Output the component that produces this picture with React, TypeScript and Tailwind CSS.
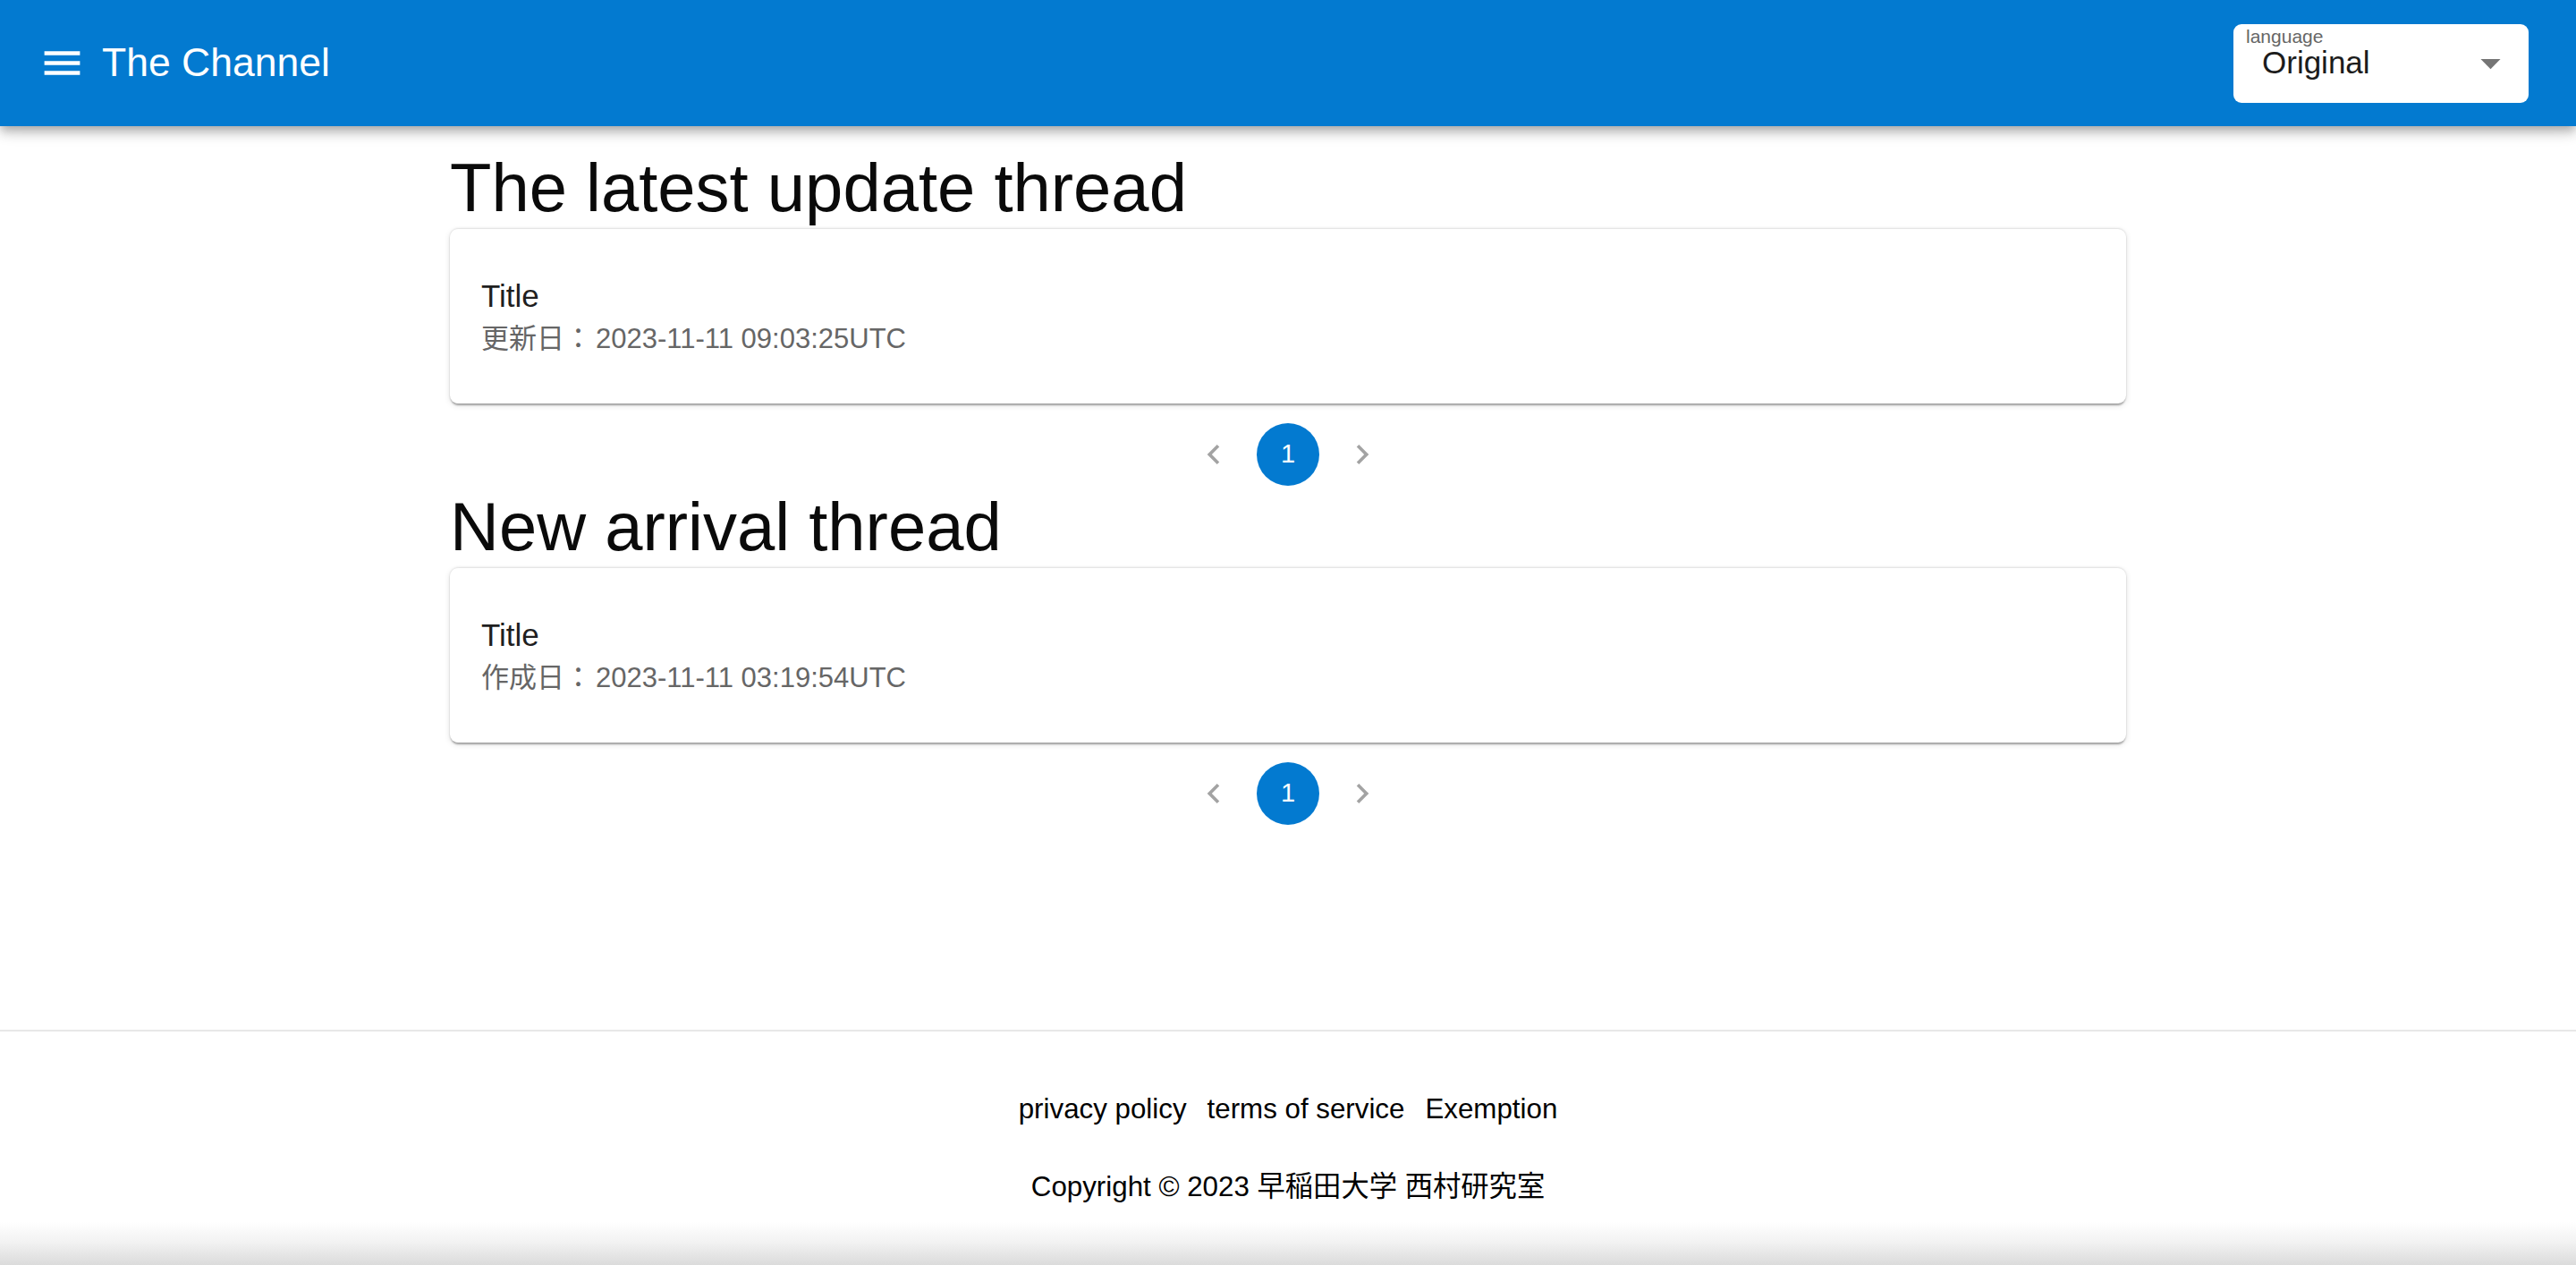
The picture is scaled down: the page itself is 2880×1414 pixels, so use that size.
import { useState } from "react";

const threads = {
  latest: [{ title: "Title", label: "更新日", date: "2023-11-11 09:03:25UTC" }],
  arrival: [{ title: "Title", label: "作成日", date: "2023-11-11 03:19:54UTC" }],
};

const font = "font-['Liberation_Sans','Noto_Sans_CJK_JP',sans-serif]";

const MenuIcon = () => (
  <svg viewBox="0 0 24 24" className="w-[53px] h-[53px] fill-white">
    <path d="M3 18h18v-2H3v2zm0-5h18v-2H3v2zm0-7v2h18V6H3z" />
  </svg>
);

const Chevron = ({ dir }: { dir: "left" | "right" }) => (
  <svg viewBox="0 0 24 24" className="w-[44px] h-[44px] fill-[#a3a3a3]">
    {dir === "left" ? (
      <path d="M15.41 7.41 14 6l-6 6 6 6 1.41-1.41L10.83 12z" />
    ) : (
      <path d="M10 6 8.59 7.41 13.17 12l-4.58 4.59L10 18l6-6z" />
    )}
  </svg>
);

const Header = () => (
  <header className="relative z-10 h-[141px] bg-[#037ad0] flex items-center pl-[43px] pr-[53px] shadow-[0_4px_9px_-2px_rgba(0,0,0,0.2),0_9px_11px_0_rgba(0,0,0,0.14),0_2px_22px_0_rgba(0,0,0,0.12)]">
    <button className="flex items-center">
      <MenuIcon />
    </button>
    <h6 className="ml-[18px] text-[44.5px] leading-none text-white">The Channel</h6>
    <div className="ml-auto w-[330px] h-[88px] bg-white rounded-[9px] flex items-center">
      <div className="flex-1 flex flex-col self-start pt-[3px] pl-[14px]">
        <span className="text-[21px] leading-[21px] text-[#666]">language</span>
        <span className="mt-[1px] pl-[18px] text-[35px] leading-none text-[#1c1c1c]">Original</span>
      </div>
      <svg viewBox="0 0 24 24" className="mr-[16px] w-[53px] h-[53px] fill-[#757575]">
        <path d="M7 10l5 5 5-5z" />
      </svg>
    </div>
  </header>
);

type Thread = { title: string; label: string; date: string };

const ThreadCard = ({ t }: { t: Thread }) => (
  <div className="bg-white rounded-[9px] px-[35px] pt-[48px] pb-[50px] shadow-[0_4px_2px_-2px_rgba(0,0,0,0.2),0_2px_2px_0_rgba(0,0,0,0.14),0_2px_7px_0_rgba(0,0,0,0.12),0_-1px_2px_0_rgba(0,0,0,0.1)]">
    <div className="text-[35px] leading-[53px] text-[#1f1f1f]">{t.title}</div>
    <div className="text-[31px] leading-[44px] text-[#666]">
      {t.label}：<span className="ml-[4px]">{t.date}</span>
    </div>
  </div>
);

const Pagination = () => {
  const [page, setPage] = useState(1);
  return (
    <div className="mt-[22px] h-[70px] flex justify-center items-center gap-[13px]">
      <button className="w-[70px] h-[70px] flex items-center justify-center" disabled>
        <Chevron dir="left" />
      </button>
      <button
        onClick={() => setPage(1)}
        className="w-[70px] h-[70px] rounded-full bg-[#037ad0] text-white text-[29px] flex items-center justify-center"
      >
        {page}
      </button>
      <button className="w-[70px] h-[70px] flex items-center justify-center" disabled>
        <Chevron dir="right" />
      </button>
    </div>
  );
};

const Section = ({ heading, items, first }: { heading: string; items: Thread[]; first?: boolean }) => (
  <section>
    <h4 className={`${first ? "mt-[23px]" : ""} text-[76px] leading-[92px] text-[#0a0a0a]`}>{heading}</h4>
    <div className="flex flex-col gap-[18px]">
      {items.map((t, i) => (
        <ThreadCard key={i} t={t} />
      ))}
    </div>
    <Pagination />
  </section>
);

const Footer = () => (
  <footer className="border-t-2 border-[#e8e8e8] pt-[64px] text-black">
    <nav className="flex justify-center gap-[23px] text-[31.3px] leading-[46px]">
      <a href="#">privacy policy</a>
      <a href="#">terms of service</a>
      <a href="#">Exemption</a>
    </nav>
    <p className="mt-[41px] text-center text-[31.3px] leading-[46px]">Copyright © 2023 早稲田大学 西村研究室</p>
    <div className="h-[64px] bg-[linear-gradient(to_bottom,#ffffff_0%,#ffffff_25%,#f2f2f2_60%,#dbdbdb_100%)]" />
  </footer>
);

export default function App() {
  return (
    <div className={`${font} min-h-[1414px] bg-white flex flex-col`}>
      <Header />
      <main className="flex-1 w-[1874px] mx-auto">
        <Section heading="The latest update thread" items={threads.latest} first />
        <Section heading="New arrival thread" items={threads.arrival} />
      </main>
      <Footer />
    </div>
  );
}
